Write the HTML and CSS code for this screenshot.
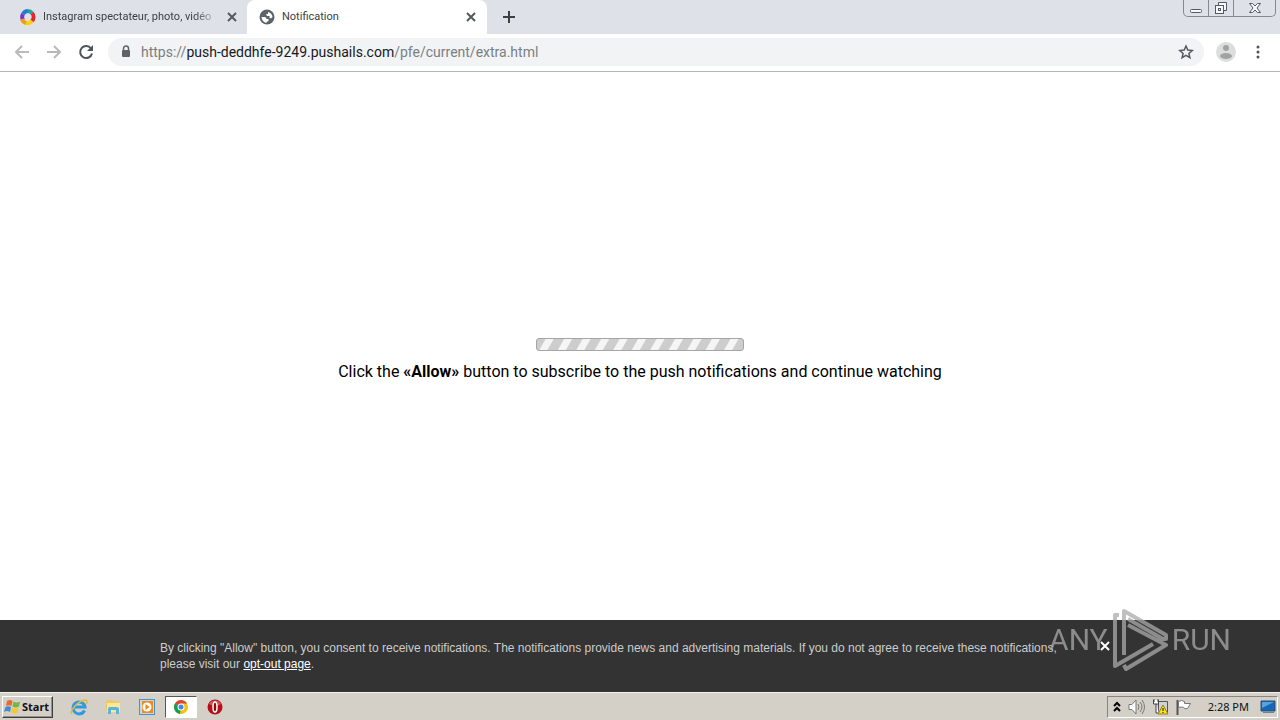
FILE: index.html
```html
<!DOCTYPE html>
<html lang="en">
<head>
<meta charset="utf-8">
<title>Notification</title>
<link rel="stylesheet" href="styles.css">
</head>
<body>
<header class="browser">
  <div class="tabstrip">
    <div class="tab">
      <svg class="favicon" viewBox="0 0 16 16" fill="none" stroke-width="4"><path d="M3 11A6 6 0 0 1 3 5" stroke="#7b35c4"/><path d="M3 5A6 6 0 0 1 8 2" stroke="#2779d8"/><path d="M8 2A6 6 0 0 1 12 4" stroke="#1fa79a"/><path d="M12 4A6 6 0 0 1 12 12" stroke="#e3262d"/><path d="M12 12A6 6 0 0 1 6 14" stroke="#ffd000"/><path d="M6 14A6 6 0 0 1 2 10" stroke="#f39a13"/></svg>
      <span class="tab-title faded">Instagram spectateur, photo, vidéo</span>
      <button class="tab-close" aria-label="Close tab"><svg viewBox="0 0 10 10"><path d="M1 1l8 8M9 1l-8 8"/></svg></button>
    </div>
    <div class="tab active">
      <svg class="favicon" viewBox="0 0 16 16"><circle cx="8" cy="8" r="7.500" fill="#5f6368"/><path d="M2.500 8h3q2 0 2 2h2v2l-2 1v1Q3 13 2.500 8M9 3q4 1 4.500 5-1 2-3 1V7H8L7 5h2z" fill="#fff"/></svg>
      <span class="tab-title">Notification</span>
      <button class="tab-close" aria-label="Close tab"><svg viewBox="0 0 10 10"><path d="M1 1l8 8M9 1l-8 8"/></svg></button>
    </div>
    <button class="new-tab" aria-label="New tab"><svg viewBox="0 0 12 12"><path d="M6 0v12M0 6h12"/></svg></button>
    <div class="window-controls">
      <button aria-label="Minimize"><svg width="14" height="14" viewBox="0 0 14 14"><rect x="1.500" y="8.500" width="11" height="3" rx="1"/></svg></button>
      <button aria-label="Restore"><svg width="14" height="14" viewBox="0 0 14 14"><path d="M4.500 4V1.500h8v8H10"/><rect x="1.500" y="4.500" width="8" height="8"/><rect x="4.500" y="7.500" width="2" height="2"/></svg></button>
      <button aria-label="Close"><svg width="14" height="14" viewBox="0 0 14 14"><path d="M1.500 2.500h3L7 5l2.500-2.500h3L9 7l3.500 4.500h-3L7 9l-2.500 2.500h-3L5 7z"/></svg></button>
    </div>
  </div>
  <div class="toolbar">
    <button class="nav dim" aria-label="Back"><svg viewBox="0 0 16 16"><path d="M15 8H2M8 2L2 8l6 6"/></svg></button>
    <button class="nav dim" aria-label="Forward"><svg viewBox="0 0 16 16"><path d="M1 8h13M8 2l6 6-6 6"/></svg></button>
    <button class="nav" aria-label="Reload"><svg viewBox="0 0 16 16"><path d="M13 4.500A6 6 0 1 0 14 9.500"/><path d="M15 1v6H9z" class="solid"/></svg></button>
    <div class="address">
      <svg class="lock" viewBox="0 0 10 13"><rect x="1" y="5" width="8" height="7" rx="1" fill="#5f6368"/><path d="M2.500 5V3.500a2.500 2.500 0 0 1 5 0V5" fill="none" stroke="#5f6368" stroke-width="1.500"/></svg>
      <span class="url">https://<b>push-deddhfe-9249.pushails.com</b>/pfe/current/extra.html</span>
      <button class="star" aria-label="Bookmark this page"><svg viewBox="0 0 16 16"><path d="M8 2l1.800 4.100 4.400.4-3.300 2.900 1 4.300L8 11.400l-3.900 2.300 1-4.300-3.300-2.900 4.400-.4z"/></svg></button>
    </div>
    <button class="avatar" aria-label="Profile"><svg viewBox="0 0 20 20"><circle cx="10" cy="10" r="10" fill="#dcdddd"/><circle cx="10" cy="6" r="3" fill="#a0a2a4"/><ellipse cx="10" cy="14" rx="6" ry="3" fill="#a0a2a4"/></svg></button>
    <button class="menu" aria-label="Menu"><svg viewBox="0 0 4 14"><circle cx="2" cy="2" r="1.500"/><circle cx="2" cy="7" r="1.500"/><circle cx="2" cy="12" r="1.500"/></svg></button>
  </div>
</header>

<main class="page">
  <div class="loader" role="progressbar" aria-label="Loading"></div>
  <p class="prompt">Click the <b>«Allow»</b> button to subscribe to the push notifications and continue watching</p>
</main>

<aside class="consent">
  <div class="consent-inner">
    <p>By clicking "Allow" button, you consent to receive notifications. The notifications provide news and advertising materials. If you do not agree to receive these notifications, please visit our <a href="#">opt-out page</a>.</p>
    <button class="consent-close" aria-label="Close"><svg viewBox="0 0 10 10"><path d="M1 1l8 8M9 1l-8 8"/></svg></button>
  </div>
  <div class="watermark">
    <span>ANY</span>
    <svg viewBox="0 0 56 64"><path d="M7 7H3v51l38-22M12 47V3l42 24v4h-3L16 11M16 17l38 20-40 24-2-4"/></svg>
    <span>RUN</span>
  </div>
</aside>

<footer class="taskbar">
  <button class="start"><svg viewBox="0 0 17 16"><path d="M3 2q3-2 5.500 0L7.500 7Q5 5.500 2 7z" fill="#ee6a2c"/><path d="M9.500 2.500q3 2 6.500 0L15 7.500q-3 2-6.500 0z" fill="#73b844"/><path d="M1.500 8q3-1.500 5.500 0L6 13q-3-2-6 0z" fill="#3b8cd9"/><path d="M8 8.500q3 2 6.500 0l-1 5q-3 2-6.500 0z" fill="#f6c72f"/></svg>Start</button>
  <nav class="quick">
    <button aria-label="Internet Explorer"><svg viewBox="0 0 18 18" fill="none"><path d="M14.500 12.500A6 6 0 1 1 15 9H5" stroke="#2c9be2" stroke-width="3"/><path d="M2 16C-1 13 8 3 15 2c3 0 2 3 1 4" stroke="#e4b93c" stroke-width="1.500"/></svg></button>
    <button aria-label="File Explorer"><svg viewBox="0 0 18 18"><path d="M2 4l1-2h5l1 1h6v10H2z" fill="#edcb64"/><path d="M3 5h13v9H3z" fill="#f9e79b"/><path d="M4 16v-5q0-2 2-2h6q3 0 3 2v5h-3v-4H7v4z" fill="#59b4d8"/></svg></button>
    <button aria-label="Media Player"><svg viewBox="0 0 18 18"><rect x="1.500" y="1.500" width="15" height="15" fill="#b9dcf4" stroke="#4b91c9"/><rect x="4" y="3" width="11" height="12" fill="#f38b1c"/><circle cx="9" cy="9" r="4.500" fill="#fff"/><path d="M7.500 6l4 3-4 3z" fill="#f3820c"/></svg></button>
    <button class="current" aria-label="Chrome"><svg viewBox="0 0 18 18"><circle cx="9" cy="9" r="7" fill="#f4c20d"/><path d="M9 9L3 5.500A7 7 0 0 1 15 5.500H9z" fill="#db4437"/><path d="M9 9l-1 7A7 7 0 0 1 3 5.500z" fill="#0f9d58"/><circle cx="9" cy="9" r="3.500" fill="#fff"/><circle cx="9" cy="9" r="2.500" fill="#4285f4"/></svg></button>
    <button aria-label="Opera"><svg viewBox="0 0 18 18"><circle cx="9" cy="9" r="7.500" fill="#b51018"/><path d="M3 6a7 7 0 0 1 12 0q-6 4-12 0" fill="#d95255"/><ellipse cx="9" cy="9" rx="2" ry="5" fill="#8d0b11" stroke="#fff" stroke-width="1.500"/></svg></button>
  </nav>
  <div class="tray">
    <svg class="chevrons" viewBox="0 0 8 12"><path d="M1 5l3-3 3 3M1 10l3-3 3 3"/></svg>
    <svg viewBox="0 0 18 18" fill="none" stroke="#777"><path d="M2 6.500h3L9 2v14l-4-4.500H2z" fill="#fff"/><path d="M11 6q2 3 0 6M13 4q4 5 0 10M15 2q5 7 0 14"/></svg>
    <svg viewBox="0 0 18 18"><path d="M7.500 3.500h9v11h-9z" fill="#cfd3d5" stroke="#555"/><path d="M2.500 2v4h5V2M5 6v9h3M3 1v3M7 1v3" fill="#fff" stroke="#444"/><path d="M12 7l5 9H7z" fill="#ffdf22" stroke="#94811b"/><path d="M12 10v3M12 14v1" stroke="#111"/></svg>
    <svg viewBox="0 0 18 18"><path d="M2.500 17V2" stroke="#555" stroke-width="2"/><path d="M3.500 3.500q3-2 6 0v2h6l-3 5q-3 1-4-1-2-1-5 0z" fill="#fff" stroke="#777"/></svg>
    <time>2:28 PM</time>
    <svg class="desktop" viewBox="0 0 16 14"><path d="M1 1h14v10H1z" fill="#1765b9" stroke="#295071"/><path d="M2 2h12L2 8z" fill="#56a3df"/><path d="M3 12h11v1H3z" fill="#718596"/></svg>
  </div>
</footer>
</body>
</html>
```
FILE: styles.css
```css
* { box-sizing: border-box; }
body {
  margin: 0;
  min-height: 100vh;
  display: flex;
  flex-direction: column;
  background: #fff;
  color: #111;
  font-family: "Noto Sans", sans-serif;
}
button { margin: 0; padding: 0; border: 0; background: none; font: inherit; color: inherit; }
svg { display: block; flex: none; }
p { margin: 0; }

.tabstrip { display: flex; height: 34px; background: #dee1e7; }
.tab { display: flex; align-items: center; width: 247px; padding: 0 10px 0 20px; }
.tab.active { width: 240px; padding: 0 11px 0 12px; background: #fff; border-radius: 8px 8px 0 0; }
.favicon { width: 16px; height: 16px; }
.tab-title {
  flex: 1;
  margin: 0 8px 0 7px;
  font: 11px/16px Roboto, sans-serif;
  color: #3c4043;
  white-space: nowrap;
}
.faded { mask-image: linear-gradient(to right, #000 86%, transparent); }
.tab-close svg { width: 10px; height: 10px; stroke: #55595e; stroke-width: 2; }
.new-tab { margin-left: 16px; }
.new-tab svg { width: 12px; height: 12px; stroke: #3c4043; stroke-width: 2; }
.window-controls {
  display: flex;
  height: 17px;
  margin: 0 4px 0 auto;
  border: 1px solid #858a91;
  border-top: 0;
  border-radius: 0 0 5px 5px;
}
.window-controls button { display: flex; justify-content: center; align-items: center; width: 25px; }
.window-controls button + button { border-left: 1px solid #858a91; }
.window-controls button:last-child { width: 42px; }
.window-controls svg { fill: #f7f8fa; stroke: #555961; }
.window-controls button:first-child { width: 24px; }

.toolbar { display: flex; align-items: center; height: 38px; padding: 0 14px 2px; border-bottom: 1px solid #b4b5b6; }
.nav { margin-right: 16px; }
.nav svg { width: 16px; height: 16px; fill: none; stroke: #505357; stroke-width: 2; }
.nav .solid { fill: #505357; stroke: none; }
.nav.dim svg { stroke: #b9babc; }
.nav:nth-child(3) { margin-right: 14px; }
.address { flex: 1; display: flex; align-items: center; height: 28px; padding: 0 10px 0 13px; border-radius: 14px; background: #f1f3f5; }
.lock { width: 10px; height: 13px; }
.url { flex: 1; margin-left: 10px; font: 14px/20px Roboto, sans-serif; color: #7b7f83; }
.url b { font-weight: 400; color: #17191c; }
.star svg { width: 16px; height: 16px; fill: none; stroke: #55595e; stroke-width: 1.500; }
.avatar { margin-left: 12px; }
.avatar svg { width: 20px; height: 20px; }
.menu { margin: 0 6px 0 20px; }
.menu svg { width: 4px; height: 14px; fill: #505357; }

.page { flex: 1; display: flex; flex-direction: column; align-items: center; justify-content: center; gap: 10px; padding-top: 28px; }
.loader {
  width: 208px;
  height: 13px;
  border: 1px solid #a5a5a5;
  border-radius: 3px;
  background: repeating-linear-gradient(120deg, #cdcdcd 0 7px, #f5f5f5 8px 14px, #cdcdcd 15px 16px);
}
.prompt { font: 16px/22px Roboto, sans-serif; color: #000; }

.consent { position: relative; padding: 20px 160px; background: #333; }
.consent-inner { display: flex; justify-content: space-between; }
.consent p { flex: 1; max-width: 920px; font: 12px/16px "Liberation Sans", Arial, sans-serif; color: #ccc; }
.consent a { color: #fff; }
.consent-close { align-self: flex-start; padding-right: 10px; }
.consent-close svg { width: 10px; height: 10px; margin-top: 1px; stroke: #fff; stroke-width: 2; }
.watermark {
  position: absolute;
  right: 49px;
  top: -12px;
  display: flex;
  align-items: center;
  gap: 4px;
  color: #aaa;
  opacity: .75;
  font: 30px/64px Roboto, sans-serif;
  pointer-events: none;
}
.watermark svg { width: 56px; height: 64px; fill: none; stroke: #aaa; stroke-width: 4; stroke-linejoin: round; }

.taskbar { display: flex; align-items: center; height: 28px; padding: 0 2px; background: #d4d0c8; border-top: 1px solid #f4f2ed; }
.start {
  display: flex;
  align-items: center;
  gap: 1px;
  height: 22px;
  padding: 0 3px 0 1px;
  border: 1px solid;
  border-color: #fff #404040 #404040 #fff;
  box-shadow: inset -1px -1px #96928b;
  font: bold 11px/16px "Noto Sans", sans-serif;
}
.start svg { width: 17px; height: 16px; }
.quick { display: flex; gap: 2px; margin-left: 10px; }
.quick button { display: flex; align-items: center; justify-content: center; width: 32px; height: 22px; }
.quick svg { width: 18px; height: 18px; }
.quick .current { border: 1px solid; border-color: #555 #fff #fff #555; background: #fff; }
.tray {
  display: flex;
  align-items: center;
  gap: 6px;
  height: 22px;
  margin-left: auto;
  padding: 0 1px 0 5px;
  border: 1px solid;
  border-color: #88857e #fff #fff #88857e;
}
.tray svg { width: 18px; height: 18px; }
.tray .chevrons { width: 8px; height: 12px; fill: none; stroke: #000; stroke-width: 2; }
.tray time { margin: 0 5px 0 9px; font: 11px/16px "Noto Sans", sans-serif; }
.tray .desktop { width: 16px; height: 14px; }
```
